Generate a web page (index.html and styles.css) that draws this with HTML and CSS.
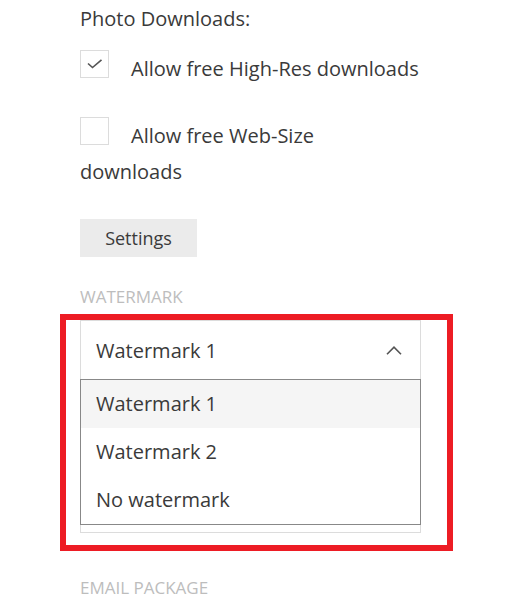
FILE: index.html
```html
<!DOCTYPE html>
<html lang="en">
<head>
  <meta charset="UTF-8" />
  <title>Gallery Settings</title>
  <link rel="stylesheet" href="styles.css">
</head>
<body>
  <div class="panel">
    <div class="field-title">Photo Downloads:</div>

    <label class="check-row">
      <span class="checkbox checked">
        <svg width="16" height="10" viewBox="0 0 16 10"><path d="M1 4.5 L5.5 8.5 L14.5 0.8" fill="none" stroke="#555" stroke-width="1.6"/></svg>
      </span>Allow free High-Res downloads
    </label>

    <label class="check-row">
      <span class="checkbox"></span>Allow free Web-Size downloads
    </label>

    <button class="settings-button">Settings</button>

    <div class="section-label">Watermark</div>

    <div class="highlight">
      <div class="select">
        <div class="select-current">
          <span>Watermark 1</span>
          <svg class="chevron" width="16" height="9" viewBox="0 0 16 9"><path d="M1 8.2 L8 1.2 L15 8.2" fill="none" stroke="#555" stroke-width="1.6"/></svg>
        </div>
        <ul class="select-menu">
          <li class="active">Watermark 1</li>
          <li>Watermark 2</li>
          <li>No watermark</li>
        </ul>
      </div>
    </div>

    <div class="section-label email">Email Package</div>
  </div>
</body>
</html>
```

FILE: styles.css
```css
* {
  box-sizing: border-box;
}

body {
  margin: 0;
  font-family: 'Open Sans', sans-serif;
  color: #3a3a3a;
  background: #fff;
}

.panel {
  width: 341px;
  margin-left: 80px;
  padding-top: 1px;
}

.field-title {
  font-size: 20px;
  line-height: 36px;
}

.check-row {
  display: block;
  width: 340px;
  font-size: 20px;
  line-height: 36px;
  margin-top: 14px;
}

.check-row + .check-row {
  margin-top: 31px;
}

.checkbox {
  display: inline-flex;
  align-items: center;
  justify-content: center;
  width: 29px;
  height: 28px;
  border: 1px solid #dcdcdc;
  vertical-align: middle;
  margin-right: 22px;
  position: relative;
  top: -7px;
}

.settings-button {
  display: block;
  margin-top: 29px;
  width: 117px;
  height: 38px;
  border: none;
  background: #ebebeb;
  font-family: 'Open Sans', sans-serif;
  font-size: 18px;
  color: #3a3a3a;
  padding: 0;
}

.section-label {
  margin-top: 30px;
  font-size: 17px;
  line-height: 20px;
  color: #bdbdbd;
  text-transform: uppercase;
}

.highlight {
  margin: 7px 0 0 -20px;
  width: 393px;
  border: 6px solid #ed1c24;
  padding: 0 26px 12px 14px;
}

.select {
  position: relative;
  height: 213px;
  border: 1px solid #dcdcdc;
}

.select-current {
  display: flex;
  align-items: center;
  justify-content: space-between;
  height: 58px;
  padding: 0 18px 0 15px;
  font-size: 20px;
}

.select-menu {
  position: absolute;
  top: 58px;
  left: -1px;
  width: 341px;
  margin: 0;
  padding: 0;
  list-style: none;
  border: 1px solid #888;
  background: #fff;
}

.select-menu li {
  height: 48px;
  line-height: 48px;
  padding-left: 15px;
  font-size: 20px;
}

.select-menu li.active {
  background: #f5f5f5;
}

.section-label.email {
  margin-top: 27px;
}
```
